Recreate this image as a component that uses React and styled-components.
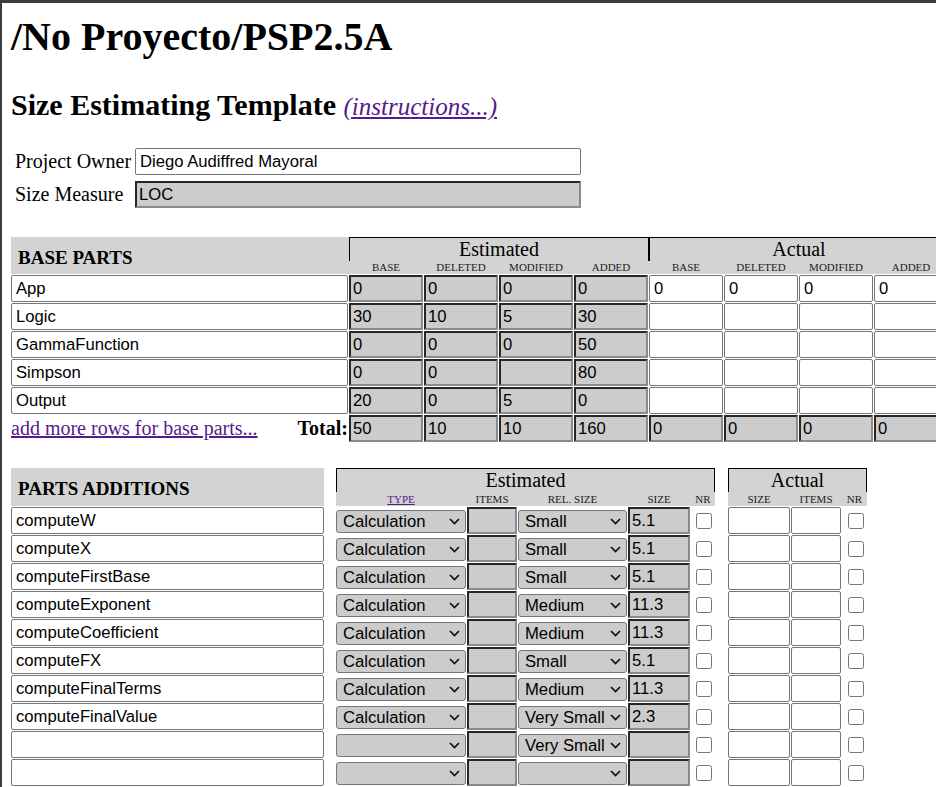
import React from "react";
import styled, { createGlobalStyle } from "styled-components";

const baseParts = [
    {name: "App", est: ["0", "0", "0", "0"], act: ["0", "0", "0", "0"]},
    {name: "Logic", est: ["30", "10", "5", "30"], act: ["", "", "", ""]},
    {name: "GammaFunction", est: ["0", "0", "0", "50"], act: ["", "", "", ""]},
    {name: "Simpson", est: ["0", "0", "", "80"], act: ["", "", "", ""]},
    {name: "Output", est: ["20", "0", "5", "0"], act: ["", "", "", ""]},
];

const totals = {est: ["50", "10", "10", "160"], act: ["0", "0", "0", "0"]};

const additions = [
    {name: "computeW", type: "Calculation", rel: "Small", size: "5.1"},
    {name: "computeX", type: "Calculation", rel: "Small", size: "5.1"},
    {name: "computeFirstBase", type: "Calculation", rel: "Small", size: "5.1"},
    {name: "computeExponent", type: "Calculation", rel: "Medium", size: "11.3"},
    {name: "computeCoefficient", type: "Calculation", rel: "Medium", size: "11.3"},
    {name: "computeFX", type: "Calculation", rel: "Small", size: "5.1"},
    {name: "computeFinalTerms", type: "Calculation", rel: "Medium", size: "11.3"},
    {name: "computeFinalValue", type: "Calculation", rel: "Very Small", size: "2.3"},
    {name: "", type: "", rel: "Very Small", size: ""},
    {name: "", type: "", rel: "", size: ""},
    {name: "", type: "", rel: "", size: ""},
];

const typeOptions = ["", "Calculation", "Data", "I/O", "Logic", "Set-up", "Text"];
const relOptions = ["", "Very Small", "Small", "Medium", "Large", "Very Large"];
const baseHeads = ["BASE", "DELETED", "MODIFIED", "ADDED"];

function Dropdown({value, options}) {
    return (
        <PickerWrap>
            <Picker defaultValue={value}>
                {options.map((o) => <option key={o} value={o}>{o}</option>)}
            </Picker>
            <Chevron viewBox="0 0 11 7">
                <path d="M1 1 L5.5 5.5 L10 1" fill="none" stroke="#111" strokeWidth="1.7"/>
            </Chevron>
        </PickerWrap>
    );
}

function App() {
    return (
        <Page>
            <GlobalStyle/>
            <Title>/No Proyecto/PSP2.5A</Title>
            <Subtitle>
                Size Estimating Template <Instructions href="#">(instructions...)</Instructions>
            </Subtitle>

            <OwnerForm>
                <Label>Project Owner</Label>
                <Field defaultValue="Diego Audiffred Mayoral"/>
                <Label>Size Measure</Label>
                <Field $inset readOnly defaultValue="LOC"/>
            </OwnerForm>

            <BaseTable>
                <BaseHead>
                    <SectionName>BASE PARTS</SectionName>
                    <GroupTitle $col={2} $thick={false}>Estimated</GroupTitle>
                    <GroupTitle $col={6} $thick>Actual</GroupTitle>
                    {[...baseHeads, ...baseHeads].map((h, i) => (
                        <SubHead key={i} style={{gridColumn: i + 2}}>{h}</SubHead>
                    ))}
                </BaseHead>
                {baseParts.map((row) => (
                    <BaseRow key={row.name}>
                        <Field defaultValue={row.name}/>
                        {row.est.map((v, i) => <Field key={"e" + i} $inset defaultValue={v}/>)}
                        {row.act.map((v, i) => <Field key={"a" + i} defaultValue={v}/>)}
                    </BaseRow>
                ))}
                <BaseRow>
                    <TotalCell>
                        <MoreLink href="#">add more rows for base parts...</MoreLink>
                        <TotalLabel>Total:</TotalLabel>
                    </TotalCell>
                    {[...totals.est, ...totals.act].map((v, i) => <Field key={i} $inset readOnly defaultValue={v}/>)}
                </BaseRow>
            </BaseTable>

            <PartsTable>
                <PartsHead>
                    <SectionName>PARTS ADDITIONS</SectionName>
                    <Backdrop $from={3} $to={8}/>
                    <Backdrop $from={9} $to={12}/>
                    <BoxTitle $from={3} $to={8}>Estimated</BoxTitle>
                    <BoxTitle $from={9} $to={12}>Actual</BoxTitle>
                    <SubHead style={{gridColumn: 3}}><HeadLink href="#">TYPE</HeadLink></SubHead>
                    <SubHead style={{gridColumn: 4}}>ITEMS</SubHead>
                    <SubHead style={{gridColumn: 5}}>REL. SIZE</SubHead>
                    <SubHead style={{gridColumn: 6}}>SIZE</SubHead>
                    <SubHead style={{gridColumn: 7}}>NR</SubHead>
                    <SubHead style={{gridColumn: 9}}>SIZE</SubHead>
                    <SubHead style={{gridColumn: 10}}>ITEMS</SubHead>
                    <SubHead style={{gridColumn: 11}}>NR</SubHead>
                </PartsHead>
                {additions.map((row, i) => (
                    <PartsRow key={i}>
                        <Field defaultValue={row.name}/>
                        <span/>
                        <Dropdown value={row.type} options={typeOptions}/>
                        <Field $inset/>
                        <Dropdown value={row.rel} options={relOptions}/>
                        <Field $inset readOnly defaultValue={row.size}/>
                        <CheckCell><Check type="checkbox"/></CheckCell>
                        <span/>
                        <Field/>
                        <Field/>
                        <CheckCell><Check type="checkbox"/></CheckCell>
                    </PartsRow>
                ))}
            </PartsTable>
        </Page>
    );
}

export default App;


const GlobalStyle = createGlobalStyle`
    html, body {
        margin: 0;
        padding: 0;
        overflow: hidden;
        background: #fff;
    }
    body {
        font-family: "Liberation Serif", "Times New Roman", serif;
        font-size: 20px;
        color: #000;
    }
`;

const Page = styled.div`
    box-sizing: border-box;
    min-height: 787px;
    border-top: 3px solid #3c3c3c;
    border-left: 2px solid #3c3c3c;
    padding-left: 9px;
`;

const Title = styled.h1`
    margin: 11px 0 0;
    font-size: 40px;
    line-height: 46px;
    font-weight: 700;
`;

const Subtitle = styled.h2`
    margin: 27px 0 0;
    font-size: 30px;
    line-height: 35px;
    font-weight: 700;
`;

const Instructions = styled.a`
    font-size: 25px;
    font-style: italic;
    font-weight: 400;
    color: #551a8b;
`;

const OwnerForm = styled.div`
    display: grid;
    grid-template-columns: 124px 446px;
    grid-auto-rows: 27px;
    row-gap: 6px;
    margin-top: 24px;
`;

const Label = styled.div`
    padding-left: 4px;
    line-height: 27px;
`;

const Field = styled.input`
    box-sizing: border-box;
    width: 100%;
    height: 27px;
    margin: 0;
    padding: 0 3px 0 ${(p) => (p.$inset ? "2px" : "4px")};
    font: 16.67px "Liberation Sans", Arial, sans-serif;
    color: #000;
    outline: none;
    background: ${(p) => (p.$inset ? "#cccccc" : "#ffffff")};
    border-radius: ${(p) => (p.$inset ? "1px" : "2px")};
    border-style: solid;
    border-width: ${(p) => (p.$inset ? "2px" : "1px")};
    border-color: ${(p) => (p.$inset ? "#262626 #8a8a8a #8a8a8a #262626" : "#767676")};
`;

const BaseTable = styled.div`
    display: flex;
    flex-direction: column;
    gap: 1px;
    margin-top: 29px;
    width: 938px;
`;

const BaseHead = styled.div`
    display: grid;
    grid-template-columns: 337px repeat(8, 74px);
    grid-template-rows: 24px 13px;
    column-gap: 1px;
    background: #d3d3d3;
`;

const SectionName = styled.div`
    grid-column: 1;
    grid-row: 1 / 3;
    display: flex;
    align-items: center;
    padding: 4px 0 0 7px;
    font-size: 19px;
    font-weight: 700;
    background: #d3d3d3;
`;

const GroupTitle = styled.div`
    grid-column: ${(p) => p.$col} / span 4;
    grid-row: 1;
    box-sizing: border-box;
    margin-left: ${(p) => (p.$thick ? "-1px" : "0")};
    border-top: 1px solid #000;
    border-left: ${(p) => (p.$thick ? "2px" : "1px")} solid #000;
    text-align: center;
    font-size: 20px;
    line-height: 23px;
`;

const SubHead = styled.div`
    grid-row: 2;
    align-self: end;
    text-align: center;
    font-size: 11px;
    line-height: 13px;
    color: #222;
`;

const BaseRow = styled.div`
    display: grid;
    grid-template-columns: 337px repeat(8, 74px);
    grid-auto-rows: 27px;
    column-gap: 1px;
`;

const TotalCell = styled.div`
    display: flex;
    align-items: center;
    justify-content: space-between;
`;

const MoreLink = styled.a`
    color: #551a8b;
    font-size: 20px;
`;

const TotalLabel = styled.span`
    font-weight: 700;
    font-size: 20px;
`;

const PartsTable = styled.div`
    display: flex;
    flex-direction: column;
    gap: 1px;
    margin-top: 26px;
`;

const partsColumns = "313px 10px 130px 50px 109px 62px 24px 11px 62px 50px 25px";

const PartsHead = styled.div`
    display: grid;
    grid-template-columns: ${partsColumns};
    grid-template-rows: 24px 14px;
    column-gap: 1px;
`;

const Backdrop = styled.div`
    grid-column: ${(p) => p.$from} / ${(p) => p.$to};
    grid-row: 1 / 3;
    background: #d3d3d3;
`;

const BoxTitle = styled.div`
    grid-column: ${(p) => p.$from} / ${(p) => p.$to};
    grid-row: 1;
    box-sizing: border-box;
    border: 1px solid #000;
    border-bottom: none;
    text-align: center;
    font-size: 20px;
    line-height: 23px;
`;

const HeadLink = styled.a`
    color: #551a8b;
`;

const PartsRow = styled.div`
    display: grid;
    grid-template-columns: ${partsColumns};
    grid-auto-rows: 27px;
    column-gap: 1px;
`;

const PickerWrap = styled.div`
    position: relative;
    align-self: center;
    height: 23px;
`;

const Picker = styled.select`
    box-sizing: border-box;
    appearance: none;
    width: 100%;
    height: 23px;
    margin: 0;
    padding: 0 0 0 6px;
    font: 16.67px "Liberation Sans", Arial, sans-serif;
    color: #000;
    background-color: #cccccc;
    border: 1px solid #767676;
    border-radius: 3px;
    outline: none;
`;

const Chevron = styled.svg`
    position: absolute;
    right: 6px;
    top: 9px;
    width: 11px;
    height: 7px;
    pointer-events: none;
`;

const CheckCell = styled.div`
    display: flex;
    align-items: center;
    justify-content: center;
`;

const Check = styled.input`
    width: 16px;
    height: 16px;
    margin: 0 0 0 2px;
`;
